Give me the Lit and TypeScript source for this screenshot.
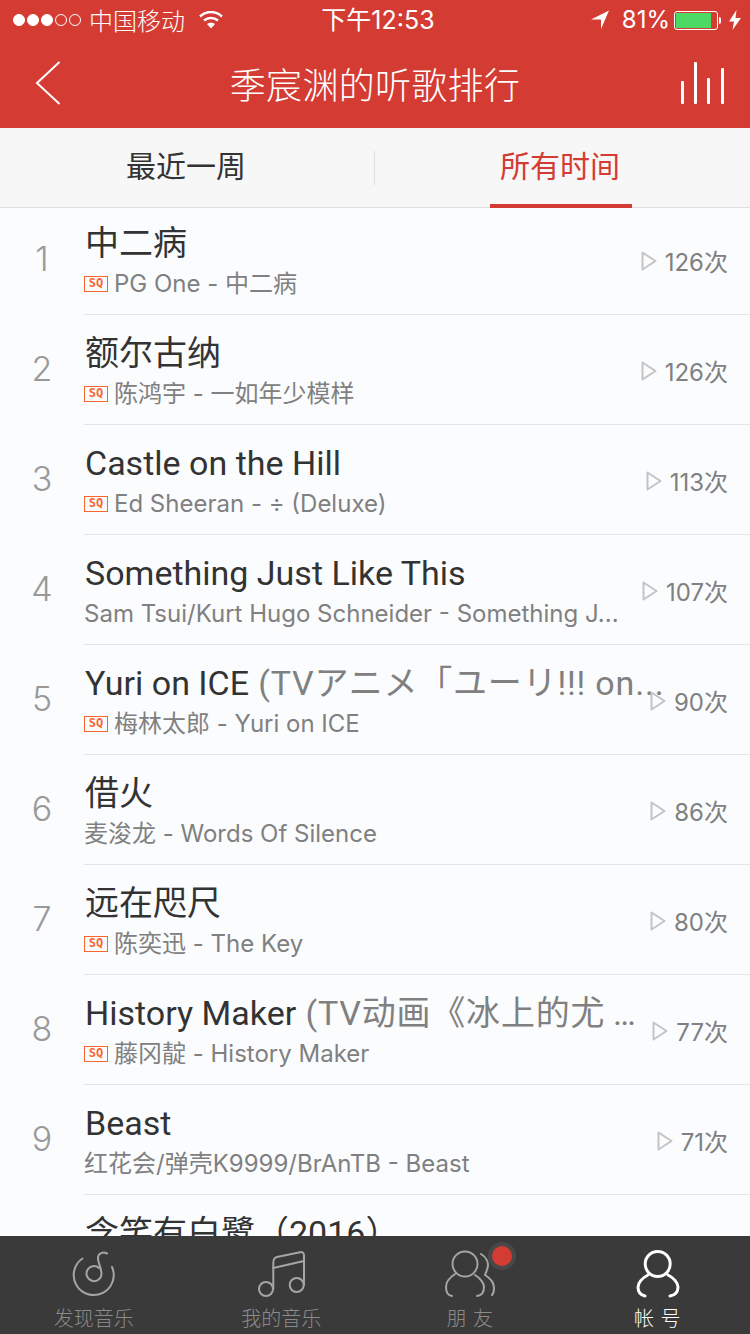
import { LitElement, css, html, svg } from 'lit';
import { customElement } from 'lit/decorators.js';

interface Song {
  title: string;
  extra?: string;
  sq?: boolean;
  sub: string;
  count: string;
}

const SONGS: Song[] = [
  { title: '中二病', sq: true, sub: 'PG One - 中二病', count: '126次' },
  { title: '额尔古纳', sq: true, sub: '陈鸿宇 - 一如年少模样', count: '126次' },
  { title: 'Castle on the Hill', sq: true, sub: 'Ed Sheeran - ÷ (Deluxe)', count: '113次' },
  { title: 'Something Just Like This', sub: 'Sam Tsui/Kurt Hugo Schneider - Something J...', count: '107次' },
  { title: 'Yuri on ICE', extra: ' (TVアニメ「ユーリ!!! on...', sq: true, sub: '梅林太郎 - Yuri on ICE', count: '90次' },
  { title: '借火', sub: '麦浚龙 - Words Of Silence', count: '86次' },
  { title: '远在咫尺', sq: true, sub: '陈奕迅 - The Key', count: '80次' },
  { title: 'History Maker', extra: ' (TV动画《冰上的尤\u2009…', sq: true, sub: '藤冈靛 - History Maker', count: '77次' },
  { title: 'Beast', sub: '红花会/弹壳K9999/BrAnTB - Beast', count: '71次' },
  { title: '含笑有白鹭（2016）', sub: '', count: '' },
];

const tabIcons = {
  discover: svg`<path d="M12.500 8.500A20 20 0 1 0 42 17"/><path d="M37 3.500C33 1.500 28.500 3 28 7.500 27.500 12 31.500 18 31.500 24A7.500 7.500 0 1 1 29 18"/>`,
  music: svg`<circle cx="9" cy="39" r="7"/><circle cx="39.700" cy="35" r="7"/><path d="M16.300 39V13C16.300 9 17.500 7.500 20 7L43 2.200C45.500 1.800 47 3 47 5.500V35"/><path d="M16.300 18L47 11"/>`,
  friends: svg`<circle cx="20" cy="14" r="12.500"/><path d="M10 24C4 28 1 33 1 37 1 42 3 45.500 7 46"/><path d="M30 25C35 28 39 33 39 37 39 42 37 45.500 32 46"/><path d="M36 4C41 7 43 12 43 15 43 19 41 22 40 25 45 28 49 33 49 38 49 41 48 44 47 45"/>`,
  account: svg`<circle cx="25.700" cy="14" r="12.500"/><path d="M16 25C10 28 6 33 6 37 6 42 8 45 13 46"/><path d="M36 25C42 28 46 33 46 37 46 42 44 45 38 46"/>`,
};

@customElement('app-root')
export class AppRoot extends LitElement {
  static styles = css`
    :host {
      display: block;
      font-family: 'Inter', 'Noto Sans CJK SC', sans-serif;
    }

    .page {
      display: flex;
      flex-direction: column;
      width: 750px;
      height: 1334px;
      overflow: hidden;
      background: #fbfcfe;
    }

    .top {
      flex: none;
      height: 128px;
      background: #d43c33;
      color: #fff;
    }

    .status {
      display: flex;
      align-items: center;
      height: 40px;
      font-size: 24px;
      line-height: 40px;
    }

    .signal {
      display: flex;
      gap: 2px;
      margin-left: 13px;
    }

    .dot {
      box-sizing: border-box;
      width: 12px;
      height: 12px;
      border-radius: 50%;
      border: 1px solid #fff;
    }

    .dot.on {
      background: #fff;
    }

    .carrier {
      margin-left: 8px;
      font-family: 'Noto Sans CJK SC', sans-serif;
      font-weight: 300;
    }

    .wifi {
      margin-left: 14px;
    }

    .clock {
      position: absolute;
      left: 0;
      width: 756px;
      text-align: center;
      font-size: 25px;
    }

    .status-right {
      display: flex;
      align-items: center;
      margin-left: auto;
      padding-right: 9px;
    }

    .pct {
      margin-left: 13px;
    }

    .battery {
      box-sizing: border-box;
      width: 44px;
      height: 19px;
      margin-left: 4px;
      padding: 1px;
      border: 1px solid #fff;
      border-radius: 3px;
    }

    .battery div {
      width: 35px;
      height: 15px;
      background: #4cd964;
    }

    .nub {
      width: 2px;
      height: 7px;
      margin-left: 1px;
      border-radius: 0 2px 2px 0;
      background: #fff;
    }

    .bolt {
      margin-left: 8px;
    }

    .nav {
      display: grid;
      grid-template-columns: 1fr auto 1fr;
      align-items: center;
      height: 88px;
      padding: 0 26px 2px;
      box-sizing: border-box;
    }

    .nav .back {
      margin-left: 9px;
    }

    .nav h1 {
      margin: 0;
      font: 300 36px/44px 'Noto Sans CJK SC', sans-serif;
      letter-spacing: 0.3px;
    }

    .nav .bars {
      justify-self: end;
    }

    .tabs {
      flex: none;
      display: flex;
      align-items: center;
      box-sizing: border-box;
      height: 80px;
      background: #f7f7f7;
      border-bottom: 1px solid #dedede;
    }

    .tab {
      position: relative;
      flex: none;
      box-sizing: border-box;
      width: 374px;
      height: 79px;
      padding-right: 2px;
      font: 400 30px/73px 'Noto Sans CJK SC', sans-serif;
      text-align: center;
      color: #333;
    }

    .tab.active {
      width: 375px;
      padding-right: 5px;
      color: #d43c33;
    }

    .tab.active::after {
      content: '';
      position: absolute;
      left: 115px;
      bottom: -1px;
      width: 142px;
      height: 4px;
      background: #d43c33;
    }

    .divider {
      flex: none;
      width: 1px;
      height: 34px;
      background: #dedede;
    }

    .list {
      flex: 1;
      min-height: 0;
      overflow: hidden;
      margin-top: -3px;
    }

    .row {
      display: flex;
      align-items: stretch;
      height: 110px;
    }

    .rank {
      flex: none;
      width: 84px;
      font-size: 34px;
      line-height: 108px;
      text-align: center;
      color: #999;
      font-weight: 300;
    }

    .body {
      flex: 1;
      min-width: 0;
      display: flex;
      align-items: center;
      box-sizing: border-box;
      border-bottom: 1px solid #e4e5e7;
      padding-right: 22px;
    }

    .text {
      flex: 1;
      min-width: 0;
      padding: 1px 0 0 1px;
    }

    /* long titles run on over the play count, as in the app */
    .title {
      font-family: 'Roboto', 'Noto Sans CJK SC', sans-serif;
      font-size: 34px;
      line-height: 46px;
      color: #333;
      white-space: nowrap;
    }

    .title span {
      color: #808080;
      letter-spacing: 0.8px;
    }

    .sub {
      display: flex;
      align-items: center;
      height: 34px;
      margin-top: 1px;
      margin-left: -1px;
      font-size: 24px;
      line-height: 34px;
      color: #808080;
      white-space: nowrap;
    }

    .sq {
      flex: none;
      box-sizing: border-box;
      width: 24px;
      height: 16px;
      margin-right: 6px;
      border: 1px solid #f9652d;
      font: 700 12px/13px 'DejaVu Sans Mono', monospace;
      text-align: center;
      color: #f9652d;
    }

    .count {
      flex: none;
      display: flex;
      align-items: center;
      gap: 8px;
      margin-left: 24px;
      padding-top: 2px;
      font-size: 24px;
      color: #808080;
    }

    .bottom {
      flex: none;
      position: relative;
      display: grid;
      grid-template-columns: repeat(4, 1fr);
      height: 98px;
      background: #3a3a3a;
    }

    .item {
      position: relative;
      display: flex;
      flex-direction: column;
      align-items: center;
      box-sizing: border-box;
      padding-top: 14px;
      color: #8b8b8b;
      font: 300 20px/30px 'Noto Sans CJK SC', sans-serif;
      word-spacing: 2px;
    }

    .item.friends {
      padding-left: 2px;
    }

    .item.active {
      padding-left: 2px;
      color: #fff;
    }

    .item svg {
      display: block;
      fill: none;
      stroke: #a5a5a5;
      stroke-width: 2;
      stroke-linecap: round;
      stroke-linejoin: round;
    }

    .item.active svg {
      stroke: #fff;
      stroke-width: 3;
    }

    .item label {
      margin-top: 3px;
    }

    .badge {
      position: absolute;
      top: 10px;
      left: 117px;
      width: 20px;
      height: 20px;
      border-radius: 50%;
      background: #d43c33;
      box-shadow: 0 0 0 4px #484848;
    }
  `;

  private renderRow(song: Song, i: number) {
    return html`
      <div class="row">
        <div class="rank">${i + 1}</div>
        <div class="body">
          <div class="text">
            <div class="title">${song.title}${song.extra ? html`<span>${song.extra}</span>` : ''}</div>
            <div class="sub">
              ${song.sq ? html`<div class="sq">SQ</div>` : ''}
              <span>${song.sub}</span>
            </div>
          </div>
          ${song.count
            ? html`<div class="count">
                <svg width="16" height="20" viewBox="0 0 16 20">
                  <path d="M1.500 1.500L14.500 10 1.500 18.500Z" fill="none" stroke="#c4c4c4" stroke-width="2" stroke-linejoin="round" />
                </svg>
                ${song.count}
              </div>`
            : ''}
        </div>
      </div>
    `;
  }

  render() {
    return html`
      <div class="page">
        <div class="top">
          <div class="status">
            <div class="signal">
              <div class="dot on"></div>
              <div class="dot on"></div>
              <div class="dot on"></div>
              <div class="dot"></div>
              <div class="dot"></div>
            </div>
            <div class="carrier">中国移动</div>
            <svg class="wifi" width="24" height="18" viewBox="0 0 24 18" fill="none" stroke="#fff" stroke-width="2.500">
              <path d="M1 5.500C7.500 -0.500 16.500 -0.500 23 5.500" />
              <path d="M5 9.500c4-3.500 10-3.500 14 0" />
              <path d="M12 17.500L8 13c2.300-1.800 5.700-1.800 8 0Z" fill="#fff" stroke="none" />
            </svg>
            <div class="clock">下午12:53</div>
            <div class="status-right">
              <svg width="18" height="20" viewBox="0 0 18 20"><path d="M0 9.500L18 0.500 10 19V9.500Z" fill="#fff" /></svg>
              <div class="pct">81%</div>
              <div class="battery"><div></div></div>
              <div class="nub"></div>
              <svg class="bolt" width="12" height="20" viewBox="0 0 12 20"><path d="M7.500 0L0 11.500h5L3.500 20 12 8H6.500Z" fill="#fff" /></svg>
            </div>
          </div>
          <div class="nav">
            <svg class="back" width="26" height="44" viewBox="0 0 26 44" fill="none" stroke="#fff" stroke-width="2">
              <path d="M24.500 1L2 22l22.500 21" />
            </svg>
            <h1>季宸渊的听歌排行</h1>
            <svg class="bars" width="43" height="42" viewBox="0 0 43 42" fill="#fff">
              <rect x="0" y="19" width="3" height="23" rx="1" />
              <rect x="13" y="0" width="3" height="42" rx="1" />
              <rect x="26" y="16" width="3" height="26" rx="1" />
              <rect x="40" y="6" width="3" height="36" rx="1" />
            </svg>
          </div>
        </div>
        <div class="tabs">
          <div class="tab">最近一周</div>
          <div class="divider"></div>
          <div class="tab active">所有时间</div>
        </div>
        <div class="list">${SONGS.map((s, i) => this.renderRow(s, i))}</div>
        <div class="bottom">
          <div class="item">
            <svg width="48" height="50" viewBox="0 0 48 50">${tabIcons.discover}</svg>
            <label>发现音乐</label>
          </div>
          <div class="item">
            <svg width="48" height="50" viewBox="0 0 48 50">${tabIcons.music}</svg>
            <label>我的音乐</label>
          </div>
          <div class="item friends">
            <svg width="50" height="50" viewBox="0 0 50 50">${tabIcons.friends}</svg>
            <label>朋 友</label>
            <div class="badge"></div>
          </div>
          <div class="item active">
            <svg width="50" height="50" viewBox="0 0 50 50">${tabIcons.account}</svg>
            <label>帐 号</label>
          </div>
        </div>
      </div>
    `;
  }
}
